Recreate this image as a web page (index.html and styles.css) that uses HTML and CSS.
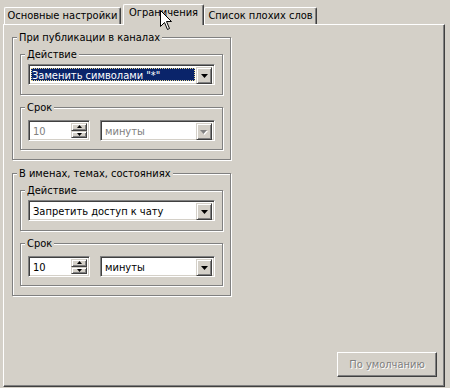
FILE: index.html
```html
<!DOCTYPE html>
<html lang="ru">
<head>
  <meta charset="UTF-8">
  <title>Ограничения</title>
  <link rel="stylesheet" href="styles.css">
</head>
<body>

  <div class="tabs">
    <div class="tab tab-first">Основные настройки</div>
    <div class="tab active">Ограничения</div>
    <div class="tab tab-last">Список плохих слов</div>
  </div>

  <div class="panel">

    <div class="group outer">
      <div class="title">При публикации в каналах</div>

      <div class="group inner">
        <div class="title">Действие</div>
        <div class="combo">
          <span class="combo-text selected">Заменить символами "*"</span>
          <span class="btn3d drop"><svg width="7" height="4" viewBox="0 0 7 4"><polygon points="0,0 7,0 3.5,4" fill="#000"/></svg></span>
        </div>
      </div>

      <div class="group inner term">
        <div class="title">Срок</div>
        <div class="row">
          <div class="spin disabled">
            <span class="combo-text">10</span>
            <span class="spin-btns">
              <span class="btn3d up"><svg width="5" height="3" viewBox="0 0 5 3"><polygon points="2.5,0 5,3 0,3" fill="#000"/></svg></span>
              <span class="btn3d down"><svg width="5" height="3" viewBox="0 0 5 3"><polygon points="0,0 5,0 2.5,3" fill="#000"/></svg></span>
            </span>
          </div>
          <div class="combo disabled">
            <span class="combo-text">минуты</span>
            <span class="btn3d drop"><svg width="8" height="5" viewBox="0 0 8 5"><polygon points="1,1 8,1 4.5,5" fill="#fff"/><polygon points="0,0 7,0 3.5,4" fill="#808080"/></svg></span>
          </div>
        </div>
      </div>
    </div>

    <div class="group outer second">
      <div class="title">В именах, темах, состояниях</div>

      <div class="group inner">
        <div class="title">Действие</div>
        <div class="combo">
          <span class="combo-text">Запретить доступ к чату</span>
          <span class="btn3d drop"><svg width="7" height="4" viewBox="0 0 7 4"><polygon points="0,0 7,0 3.5,4" fill="#000"/></svg></span>
        </div>
      </div>

      <div class="group inner term">
        <div class="title">Срок</div>
        <div class="row">
          <div class="spin">
            <span class="combo-text">10</span>
            <span class="spin-btns">
              <span class="btn3d up"><svg width="5" height="3" viewBox="0 0 5 3"><polygon points="2.5,0 5,3 0,3" fill="#000"/></svg></span>
              <span class="btn3d down"><svg width="5" height="3" viewBox="0 0 5 3"><polygon points="0,0 5,0 2.5,3" fill="#000"/></svg></span>
            </span>
          </div>
          <div class="combo">
            <span class="combo-text">минуты</span>
            <span class="btn3d drop"><svg width="7" height="4" viewBox="0 0 7 4"><polygon points="0,0 7,0 3.5,4" fill="#000"/></svg></span>
          </div>
        </div>
      </div>
    </div>

    <div class="footer">
      <button class="default-btn" disabled>По умолчанию</button>
    </div>
  </div>

  <!-- mouse pointer over the active tab -->
  <svg class="cursor" width="13" height="21" viewBox="0 0 13 21">
    <path d="M0.5 0.5 L0.5 16.5 L4.5 12.5 L7.5 19.5 L9.5 18.5 L6.5 11.5 L11.5 11.5 Z" fill="#fff" stroke="#000" stroke-width="1"/>
  </svg>

</body>
</html>
```

FILE: styles.css
```css
* {
  box-sizing: border-box;
}

body {
  margin: 0;
  width: 450px;
  height: 388px;
  overflow: hidden;
  position: relative;
  background: #d4d0c8;
  color: #000;
  font-family: "DejaVu Sans Condensed", "Liberation Sans", sans-serif;
  font-size: 11px;
}

/* Tabs */
.tabs {
  display: flex;
  align-items: flex-end;
  height: 24px;
  padding-left: 4px;
  position: relative;
  z-index: 1;
}

.tab {
  height: 17px;
  line-height: 15px;
  text-align: center;
  border: 1px solid;
  border-bottom: none;
  border-color: #fff #404040 #fff #fff;
  border-radius: 2px 2px 0 0;
  box-shadow: inset -1px 0 #808080;
  background: #d4d0c8;
  white-space: nowrap;
}

.tab-first {
  width: 117px;
  margin-right: 2px;
}

.tab.active {
  width: 81px;
  height: 21px;
  line-height: 16px;
  margin-bottom: -1px;
}

.tab-last {
  width: 113px;
}

/* Tab page */
.panel {
  margin-left: 3px;
  width: 442px;
  height: 363px;
  border: 1px solid;
  border-color: #fff #404040 #404040 #fff;
  box-shadow: inset -1px -1px #808080;
  padding: 12px 7px 9px 8px;
  display: flex;
  flex-direction: column;
}

/* Group boxes */
.group {
  border: 1px solid #808080;
  box-shadow: inset 1px 1px #fff, 1px 1px #fff;
  padding: 0 7px;
}

.group .title {
  display: table;
  margin: -7px 0 0 -3px;
  padding: 0 2px;
  line-height: 13px;
  background: #d4d0c8;
  white-space: nowrap;
}

.outer {
  width: 219px;
  padding-bottom: 9px;
}

.outer.second {
  margin-top: 13px;
}

.inner {
  margin-top: 10px;
  padding-bottom: 9px;
}

.inner .combo {
  margin-top: 3px;
}

.inner.term {
  margin-top: 12px;
  padding-bottom: 8px;
}

.row {
  display: flex;
  gap: 10px;
  margin-top: 6px;
}

.row .combo {
  flex: 1;
  margin-top: 0;
}

/* Combo and spin edits */
.combo,
.spin {
  display: flex;
  height: 21px;
  padding: 2px;
  background: #fff;
  border: 1px solid;
  border-color: #808080 #fff #fff #808080;
  box-shadow: inset 1px 1px #404040, inset -1px -1px #d4d0c8;
}

.spin {
  width: 62px;
}

.combo-text {
  flex: 1;
  padding-left: 2px;
  line-height: 17px;
  white-space: nowrap;
  overflow: hidden;
}

.combo-text.selected {
  margin: 1px 1px 1px 0;
  padding-left: 1px;
  line-height: 15px;
  background: #0a246a;
  color: #fff;
  outline: 1px dotted #e8d890;
  outline-offset: -1px;
}

.disabled .combo-text {
  color: #808080;
}

.btn3d {
  display: flex;
  align-items: center;
  justify-content: center;
  background: #d4d0c8;
  border: 1px solid;
  border-color: #d4d0c8 #404040 #404040 #d4d0c8;
  box-shadow: inset 1px 1px #fff, inset -1px -1px #808080;
}

.drop {
  width: 16px;
  height: 17px;
}

.drop svg {
  margin-top: 1px;
}

.spin-btns {
  display: flex;
  flex-direction: column;
  width: 16px;
}

.spin-btns .up {
  height: 9px;
}

.spin-btns .down {
  height: 8px;
}

/* Bottom button */
.footer {
  margin-top: auto;
  display: flex;
  justify-content: flex-end;
}

.default-btn {
  width: 100px;
  height: 25px;
  padding: 0;
  font-family: inherit;
  font-size: 11px;
  background: #d4d0c8;
  color: #808080;
  text-shadow: 1px 1px #fff;
  border: 1px solid;
  border-color: #fff #404040 #404040 #fff;
  box-shadow: inset -1px -1px #808080;
  border-radius: 0;
}

.cursor {
  position: absolute;
  left: 160px;
  top: 10px;
  z-index: 2;
}
```
